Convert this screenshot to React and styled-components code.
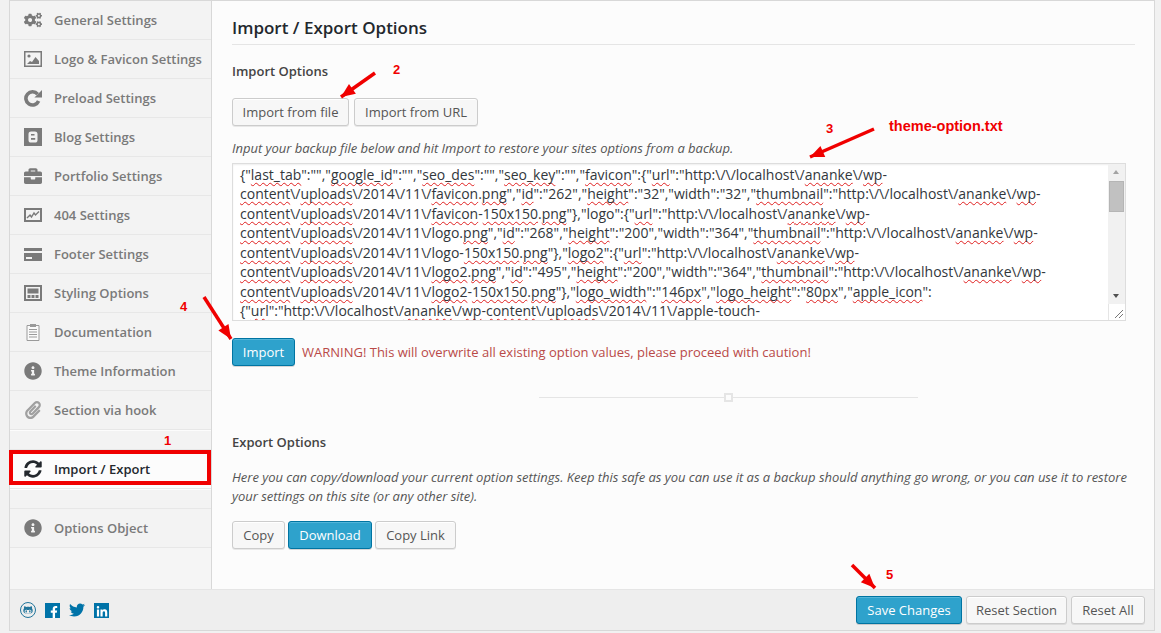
import React from 'react';
import styled, { createGlobalStyle } from 'styled-components';
import {
  FaCogs,
  FaBriefcase,
  FaInfoCircle,
  FaPaperclip,
  FaSyncAlt,
  FaFacebookF,
  FaTwitter,
  FaLinkedinIn,
  FaGithubAlt,
} from 'react-icons/fa';

const GlobalStyle = createGlobalStyle`
  html, body {
    margin: 0;
    padding: 0;
    background: #f1f1f1;
  }
  * {
    box-sizing: border-box;
  }
`;

const Page = styled.div`
  position: relative;
  width: 1161px;
  height: 633px;
  padding: 0 6px 0 9px;
  overflow: hidden;
  font-family: "Open Sans", sans-serif;
  color: #444;
`;

const Panel = styled.div`
  display: flex;
  flex-direction: column;
  height: 631px;
  border: 1px solid #d8d8d8;
  background: #fcfcfc;
`;

const Body = styled.div`
  display: flex;
  height: 588px;
`;

// Sidebar
const Sidebar = styled.ul`
  width: 202px;
  flex: none;
  margin: 0;
  padding: 0;
  list-style: none;
  background: #f5f5f5;
  border-right: 1px solid #d8d8d8;
`;

const Item = styled.li`
  display: flex;
  align-items: center;
  height: 39px;
  padding-left: 14px;
  font-size: 13px;
  font-weight: 600;
  color: ${(p) => (p.$active ? '#23282d' : '#7a7a7a')};
  background: ${(p) => (p.$active ? '#fcfcfc' : '#f3f3f3')};
  border-bottom: 1px solid #e7e7e7;
`;

const Spacer = styled.li`
  height: 20px;
  background: #f3f3f3;
  border-top: 1px solid #fcfcfc;
  border-bottom: 1px solid #e7e7e7;
`;

const ItemIcon = styled.span`
  display: flex;
  align-items: center;
  justify-content: center;
  width: 18px;
  height: 18px;
  margin-right: 12px;
  font-size: 18px;
  flex: none;
`;

const Clip = styled(FaPaperclip)`
  color: #a0a0a0;
`;

// Content
const Content = styled.main`
  flex: 1;
  padding: 16px 19px 0 20px;
  min-width: 0;
`;

const Title = styled.h2`
  margin: 0;
  height: 28px;
  font-size: 17px;
  line-height: 21px;
  font-weight: 600;
  color: #23282d;
  border-bottom: 1px solid #e5e5e5;
`;

const SectionTitle = styled.h3`
  margin: ${(p) => p.$top}px 0 0;
  font-size: 13px;
  line-height: 18px;
  font-weight: 600;
  color: #444;
`;

const ButtonRow = styled.div`
  display: flex;
  gap: ${(p) => p.$gap || 5}px;
  margin-top: ${(p) => p.$top}px;
`;

const Button = styled.button`
  height: 28px;
  width: ${(p) => p.$w}px;
  padding: 0;
  font-family: inherit;
  font-size: 13px;
  line-height: 26px;
  color: ${(p) => (p.$primary ? '#fff' : '#555')};
  background: ${(p) => (p.$primary ? '#2ea2cc' : '#f7f7f7')};
  border: 1px solid ${(p) => (p.$primary ? '#0074a2' : '#ccc')};
  border-radius: 3px;
  box-shadow: ${(p) =>
    p.$primary ? 'inset 0 1px 0 rgba(120,200,230,.5), 0 1px 0 rgba(0,0,0,.15)' : 'inset 0 1px 0 #fff, 0 1px 0 rgba(0,0,0,.08)'};
`;

const Description = styled.p`
  margin: ${(p) => p.$top}px 0 0;
  font-size: 13px;
  line-height: 19.5px;
  font-style: italic;
  letter-spacing: -0.02px;
  color: #555;
`;

const Backup = styled.div`
  display: flex;
  width: 894px;
  height: 158px;
  margin-top: 4px;
  background: #fff;
  border: 1px solid #ddd;
  box-shadow: inset 0 1px 2px rgba(0,0,0,.07);
`;

const BackupText = styled.div`
  flex: 1;
  min-width: 0;
  padding: 1px 0 0 7px;
  font-size: 14px;
  line-height: 19.5px;
  color: #32373c;
  overflow: hidden;
`;

const BackupLine = styled.div`
  white-space: nowrap;
`;

const Misspelled = styled.span`
  text-decoration: underline wavy #e02020 1px;
  text-underline-offset: 2px;
  text-decoration-skip-ink: none;
`;

const Scrollbar = styled.div`
  display: flex;
  flex-direction: column;
  width: 17px;
  flex: none;
`;

const ScrollTrack = styled.div`
  position: relative;
  height: 140px;
  background: #f1f1f1;
`;

const ScrollThumb = styled.div`
  position: absolute;
  top: 17px;
  left: 1px;
  width: 15px;
  height: 31px;
  background: #c1c1c1;
  border: 1px solid #b5b5b5;
`;

const ScrollArrow = styled.div`
  position: absolute;
  left: 5px;
  width: 0;
  height: 0;
  border-left: 3.5px solid transparent;
  border-right: 3.5px solid transparent;
  ${(p) => (p.$up ? 'top: 6px; border-bottom: 4px solid #a3a3a3;' : 'bottom: 6px; border-top: 4px solid #505050;')}
`;

const Grip = styled.svg`
  display: block;
  width: 17px;
  height: 16px;
  background: #fff;
  border-left: 1px solid #e5e5e5;
`;

const ImportRow = styled.div`
  display: flex;
  align-items: center;
  gap: 7px;
  margin-top: 17px;
`;

const Warning = styled.span`
  font-size: 13px;
  color: #b94a48;
`;

const Divider = styled.div`
  position: relative;
  width: 379px;
  height: 1px;
  margin: 31px 0 0 307px;
  background: #e5e5e5;

  &::after {
    content: '';
    position: absolute;
    box-sizing: border-box;
    left: 185px;
    top: -4px;
    width: 9px;
    height: 9px;
    background: #fcfcfc;
    border: 2px solid #e5e5e5;
  }
`;

// Footer
const Footer = styled.footer`
  display: flex;
  align-items: center;
  justify-content: space-between;
  height: 41px;
  padding: 0 9px 0 10px;
  background: #eee;
  border-top: 1px solid #e5e5e5;
`;

const Socials = styled.div`
  display: flex;
  align-items: center;
  gap: 9px;
`;

const SocialSquare = styled.span`
  display: flex;
  align-items: flex-end;
  justify-content: ${(p) => p.$justify || 'center'};
  width: 15px;
  height: 15px;
  font-size: 12px;
  color: #fff;
  background: #0073a8;
`;

const SocialBird = styled.span`
  display: flex;
  width: 16px;
  font-size: 16px;
  color: #0073a8;
`;

const GithubRing = styled.span`
  display: flex;
  align-items: center;
  justify-content: center;
  width: 16px;
  height: 16px;
  font-size: 10px;
  color: #21759b;
  border: 1px solid #21759b;
  border-radius: 50%;
`;

const Actions = styled.div`
  display: flex;
  gap: 4px;
`;

// Red notes drawn on top of the screenshot
const Overlay = styled.svg`
  position: absolute;
  left: 0;
  top: 0;
  width: 1161px;
  height: 633px;
  pointer-events: none;
`;

const Note = styled.span`
  position: absolute;
  left: ${(p) => p.$x}px;
  top: ${(p) => p.$y}px;
  font-family: "Liberation Sans", sans-serif;
  font-size: ${(p) => p.$size || 13}px;
  line-height: 14px;
  font-weight: bold;
  color: #f00000;
`;

const RedBox = styled.div`
  position: absolute;
  left: 9px;
  top: 450px;
  width: 202px;
  height: 35px;
  border: 4px solid #f00000;
`;

const PictureIcon = () => (
  <svg width="18" height="16" viewBox="0 0 18 16">
    <path fill="currentColor" fillRule="evenodd" d="M0 0h18v16H0zM1.5 1.5v13h15v-13z" />
    <circle fill="currentColor" cx="5" cy="5" r="1.6" />
    <path fill="currentColor" d="M3 13l3-3 2 1 3.5-5 3.5 4v3z" />
  </svg>
);

const RepeatIcon = () => (
  <svg width="18" height="18" viewBox="0 0 18 18">
    <path fill="none" stroke="currentColor" strokeWidth="3.6" d="M13.6 5.2A6.6 6.6 0 1 0 14.6 12" />
    <path fill="currentColor" d="M18 1v7.6h-7.6z" />
  </svg>
);

const BlogIcon = () => (
  <svg width="18" height="18" viewBox="0 0 18 18">
    <path fill="currentColor" d="M0 0h18v18H0z" />
    <rect fill="#f3f3f3" x="4.5" y="3.5" width="9" height="11" rx="2.6" />
    <path fill="currentColor" d="M7 6h3.5v1.6H7zM7 10h4.2v1.8H7z" />
  </svg>
);

const GraphIcon = () => (
  <svg width="18" height="14" viewBox="0 0 18 14">
    <path fill="currentColor" fillRule="evenodd" d="M0 0h18v14H0zM2 2v10h14V2z" />
    <path fill="none" stroke="currentColor" strokeWidth="1.4" d="M3 10l3-3 1.5 2 2.5-4 1.5 2L15 3.5" />
  </svg>
);

const CardIcon = () => (
  <svg width="18" height="13" viewBox="0 0 18 13">
    <path fill="currentColor" d="M0 0h18v3H0zM0 5h18v8H0z" />
    <path fill="#f3f3f3" d="M2 9h6v2H2z" />
  </svg>
);

const LayoutIcon = () => (
  <svg width="18" height="16" viewBox="0 0 18 16">
    <path fill="currentColor" fillRule="evenodd" d="M0 0h18v16H0zM2 2v12h14V2z" />
    <path fill="currentColor" d="M3.5 3.5h11v5h-11zM3.5 10h3v3h-3zM7.5 10h3v3h-3zM11.5 10h3v3h-3z" />
  </svg>
);

const ClipboardIcon = () => (
  <svg width="14" height="18" viewBox="0 0 14 18">
    <path fill="#fafafa" stroke="#9a9a9a" d="M1 2.5h12v15H1z" />
    <path fill="#9a9a9a" d="M4 1h6v3H4zM3 6h8v1H3zM3 8.5h8v1H3zM3 11h8v1H3zM3 13.5h8v1H3z" />
  </svg>
);

const navTop = [
  ['General Settings', <FaCogs />],
  ['Logo & Favicon Settings', <PictureIcon />],
  ['Preload Settings', <RepeatIcon />],
  ['Blog Settings', <BlogIcon />],
  ['Portfolio Settings', <FaBriefcase />],
  ['404 Settings', <GraphIcon />],
  ['Footer Settings', <CardIcon />],
  ['Styling Options', <LayoutIcon />],
  ['Documentation', <ClipboardIcon />],
  ['Theme Information', <FaInfoCircle />],
  ['Section via hook', <Clip />],
];

const backupLines = [
  '{"last_tab":"","google_id":"","seo_des":"","seo_key":"","favicon":{"url":"http:\\/\\/localhost\\/ananke\\/wp-',
  'content\\/uploads\\/2014\\/11\\/favicon.png","id":"262","height":"32","width":"32","thumbnail":"http:\\/\\/localhost\\/ananke\\/wp-',
  'content\\/uploads\\/2014\\/11\\/favicon-150x150.png"},"logo":{"url":"http:\\/\\/localhost\\/ananke\\/wp-',
  'content\\/uploads\\/2014\\/11\\/logo.png","id":"268","height":"200","width":"364","thumbnail":"http:\\/\\/localhost\\/ananke\\/wp-',
  'content\\/uploads\\/2014\\/11\\/logo-150x150.png"},"logo2":{"url":"http:\\/\\/localhost\\/ananke\\/wp-',
  'content\\/uploads\\/2014\\/11\\/logo2.png","id":"495","height":"200","width":"364","thumbnail":"http:\\/\\/localhost\\/ananke\\/wp-',
  'content\\/uploads\\/2014\\/11\\/logo2-150x150.png"},"logo_width":"146px","logo_height":"80px","apple_icon":',
  '{"url":"http:\\/\\/localhost\\/ananke\\/wp-content\\/uploads\\/2014\\/11\\/apple-touch-',
];

const spellRe = /(last_tab|google_id|seo_des|seo_key|favicon|url|ananke|wp|content|uploads|png|id(?=")|height|thumbnail|logo2|logo_width|logo_height|apple_icon|150x150|146px|80px)/g;

const markSpelling = (line) =>
  line.split(spellRe).map((part, i) => (i % 2 ? <Misspelled key={i}>{part}</Misspelled> : part));

const arrows = [
  { tail: [375, 73], tip: [341, 97] },
  { tail: [874, 129], tip: [810, 157] },
  { tail: [204, 297], tip: [231, 339] },
  { tail: [852, 565], tip: [875, 588] },
];

// arrow shape is worked out from the two end points
const arrowHead = ({ tail, tip }) => {
  const dx = tip[0] - tail[0];
  const dy = tip[1] - tail[1];
  const len = Math.hypot(dx, dy);
  const ux = dx / len;
  const uy = dy / len;
  const bx = tip[0] - ux * 14;
  const by = tip[1] - uy * 14;
  return `${tip[0]},${tip[1]} ${bx - uy * 6},${by + ux * 6} ${bx + uy * 6},${by - ux * 6}`;
};

const App = () => (
  <Page>
    <GlobalStyle />
    <Panel>
      <Body>
        <Sidebar>
          {navTop.map(([label, icon]) => (
            <Item key={label}>
              <ItemIcon>{icon}</ItemIcon>
              {label}
            </Item>
          ))}
          <Spacer />
          <Item $active>
            <ItemIcon><FaSyncAlt /></ItemIcon>
            Import / Export
          </Item>
          <Spacer />
          <Item>
            <ItemIcon><FaInfoCircle /></ItemIcon>
            Options Object
          </Item>
        </Sidebar>

        <Content>
          <Title>Import / Export Options</Title>
          <SectionTitle $top={17}>Import Options</SectionTitle>
          <ButtonRow $top={18}>
            <Button $w={117}>Import from file</Button>
            <Button $w={124}>Import from URL</Button>
          </ButtonRow>
          <Description $top={13}>Input your backup file below and hit Import to restore your sites options from a backup.</Description>
          <Backup>
            <BackupText>
              {backupLines.map((line, i) => (
                <BackupLine key={i}>{markSpelling(line)}</BackupLine>
              ))}
            </BackupText>
            <Scrollbar>
              <ScrollTrack>
                <ScrollArrow $up />
                <ScrollThumb />
                <ScrollArrow />
              </ScrollTrack>
              <Grip viewBox="0 0 16 16">
                <path stroke="#777" fill="none" d="M6 14l8-8M10 14l4-4" />
              </Grip>
            </Scrollbar>
          </Backup>
          <ImportRow>
            <Button $primary $w={63}>Import</Button>
            <Warning>WARNING! This will overwrite all existing option values, please proceed with caution!</Warning>
          </ImportRow>
          <Divider />
          <SectionTitle $top={35}>Export Options</SectionTitle>
          <Description $top={17}>
            Here you can copy/download your current option settings. Keep this safe as you can use it as a backup should anything go wrong, or you can use it to restore
            <br />
            your settings on this site (or any other site).
          </Description>
          <ButtonRow $top={14} $gap={3}>
            <Button $w={53}>Copy</Button>
            <Button $primary $w={84}>Download</Button>
            <Button $w={81}>Copy Link</Button>
          </ButtonRow>
        </Content>
      </Body>

      <Footer>
        <Socials>
          <GithubRing><FaGithubAlt /></GithubRing>
          <SocialSquare $justify="flex-end"><FaFacebookF /></SocialSquare>
          <SocialBird><FaTwitter /></SocialBird>
          <SocialSquare><FaLinkedinIn /></SocialSquare>
        </Socials>
        <Actions>
          <Button $primary $w={106}>Save Changes</Button>
          <Button $w={101}>Reset Section</Button>
          <Button $w={74}>Reset All</Button>
        </Actions>
      </Footer>
    </Panel>

    <RedBox />
    <Overlay viewBox="0 0 1161 633">
      {arrows.map((a) => (
        <g key={a.tip.join()}>
          <line x1={a.tail[0]} y1={a.tail[1]} x2={a.tip[0]} y2={a.tip[1]} stroke="#f00000" strokeWidth="3.5" />
          <polygon points={arrowHead(a)} fill="#f00000" />
        </g>
      ))}
    </Overlay>
    <Note $x={164} $y={434}>1</Note>
    <Note $x={393} $y={63}>2</Note>
    <Note $x={826} $y={122}>3</Note>
    <Note $x={180} $y={300}>4</Note>
    <Note $x={886} $y={568}>5</Note>
    <Note $x={889} $y={119} $size={14.5}>theme-option.txt</Note>
  </Page>
);

export default App;
